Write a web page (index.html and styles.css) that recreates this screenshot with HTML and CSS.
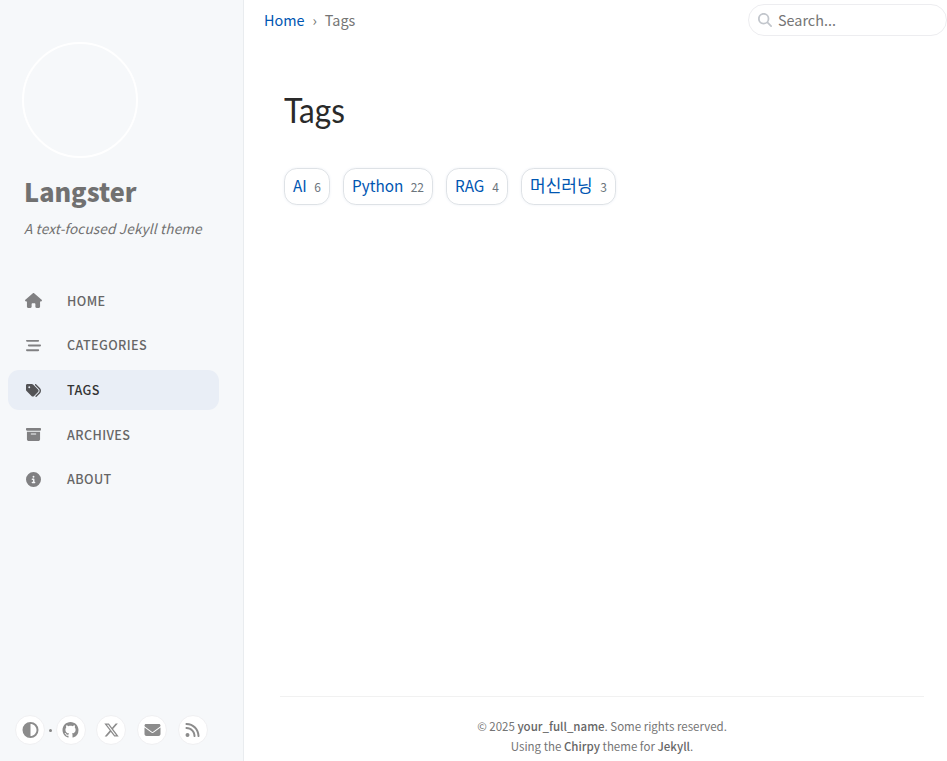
FILE: index.html
```html
<!DOCTYPE html>
<html lang="en">
<head>
<meta charset="utf-8">
<title>Tags | Langster</title>
<link rel="stylesheet" href="styles.css">
</head>
<body>
<aside class="sidebar">
  <header class="profile">
    <a class="avatar" href="#" aria-label="Avatar"></a>
    <a class="site-title" href="#"><span>Langster</span></a>
    <p class="site-subtitle"><span>A text-focused Jekyll theme</span></p>
  </header>
  <nav class="nav">
    <a class="nav-item" href="#"><svg viewBox="0 0 576 512"><path d="M575.800 255.500c0 18-15 32.100-32 32.100h-32l.7 160.200c0 2.700-.2 5.400-.5 8.100V472c0 22.100-17.900 40-40 40H392c-22.100 0-40-17.900-40-40v-88c0-17.700-14.300-32-32-32h-64c-17.700 0-32 14.300-32 32v88c0 22.100-17.900 40-40 40h-80c-22.100 0-40-17.900-40-40V287.600H32c-18 0-32-14-32-32.100 0-9 3-17 10-24L266.400 8c7-7 15-8 22-8s15 2 21 7l255.400 224.500c8 7 12 15 11 24z"/></svg><span>HOME</span></a>
    <a class="nav-item" href="#"><svg viewBox="0 0 512 512"><path d="M0 96c0-17.700 14.300-32 32-32h384c17.700 0 32 14.300 32 32s-14.300 32-32 32H32c-17.700 0-32-14.300-32-32zm64 160c0-17.700 14.300-32 32-32h384c17.700 0 32 14.300 32 32s-14.300 32-32 32H96c-17.700 0-32-14.300-32-32zm384 160c0 17.700-14.300 32-32 32H32c-17.700 0-32-14.300-32-32s14.300-32 32-32h384c17.700 0 32 14.300 32 32z"/></svg><span>CATEGORIES</span></a>
    <a class="nav-item active" href="#"><svg viewBox="0 0 512 512"><path d="M345 39.100L472.800 168.400c52.400 53 52.400 138.200 0 191.200L360.800 472.900c-9.300 9.400-24.500 9.500-33.900.2s-9.500-24.500-.2-33.900L438.600 325.900c33.900-34.300 33.900-89.400 0-123.700L310.900 72.900c-9.300-9.400-9.200-24.600.2-33.900s24.600-9.200 33.900.1zM0 229.500V80c0-26.500 21.500-48 48-48h149.500c17 0 33.300 6.700 45.300 18.700l168 168c25 25 25 65.500 0 90.500L277.300 442.700c-25 25-65.500 25-90.500 0l-168-168C6.700 262.700 0 246.500 0 229.500zM144 144a32 32 0 1 0-64 0 32 32 0 1 0 64 0z"/></svg><span>TAGS</span></a>
    <a class="nav-item" href="#"><svg viewBox="0 0 512 512"><path d="M32 32h448c17.700 0 32 14.300 32 32v32c0 17.700-14.300 32-32 32H32c-17.700 0-32-14.300-32-32V64c0-17.700 14.300-32 32-32zm0 128h448v256c0 35.300-28.700 64-64 64H96c-35.300 0-64-28.700-64-64V160zm128 80c0 8.800 7.200 16 16 16h160c8.800 0 16-7.200 16-16s-7.200-16-16-16H176c-8.800 0-16 7.200-16 16z"/></svg><span>ARCHIVES</span></a>
    <a class="nav-item" href="#"><svg viewBox="0 0 512 512"><path d="M256 512A256 256 0 1 0 256 0a256 256 0 1 0 0 512zM216 336h24v-64h-24c-13.300 0-24-10.700-24-24s10.700-24 24-24h48c13.300 0 24 10.700 24 24v88h8c13.300 0 24 10.700 24 24s-10.700 24-24 24h-80c-13.300 0-24-10.700-24-24s10.700-24 24-24zm40-208a32 32 0 1 1 0 64 32 32 0 1 1 0-64z"/></svg><span>ABOUT</span></a>
  </nav>
  <div class="contacts">
    <a class="round" href="#"><svg viewBox="0 0 512 512"><path d="M448 256c0-106-86-192-192-192v384c106 0 192-86 192-192zM0 256a256 256 0 1 1 512 0 256 256 0 1 1-512 0z"/></svg></a>
    <i class="dot"></i>
    <a class="round" href="#"><svg viewBox="0 0 16 16"><path d="M8 0C3.580 0 0 3.580 0 8c0 3.540 2.290 6.530 5.470 7.590.4.070.55-.17.55-.38 0-.19-.01-.82-.01-1.490-2.010.37-2.530-.49-2.690-.94-.09-.23-.48-.94-.82-1.130-.28-.15-.68-.52-.01-.53.63-.01 1.080.58 1.230.82.72 1.210 1.870.87 2.330.66.07-.52.28-.87.51-1.070-1.780-.2-3.640-.89-3.640-3.950 0-.87.31-1.590.82-2.150-.08-.2-.36-1.020.08-2.120 0 0 .67-.21 2.200.82.640-.18 1.320-.27 2-.27s1.360.09 2 .27c1.530-1.040 2.200-.82 2.200-.82.440 1.100.16 1.920.08 2.120.51.56.82 1.270.82 2.150 0 3.070-1.870 3.750-3.650 3.950.29.25.54.73.54 1.480 0 1.070-.01 1.930-.01 2.200 0 .21.15.46.55.38A8.010 8.010 0 0 0 16 8c0-4.420-3.580-8-8-8z"/></svg></a>
    <a class="round" href="#"><svg viewBox="0 0 512 512"><path d="M389.200 48h70.600L305.600 224.200 487 464H345L233.700 318.600 106.500 464H35.800l164.900-188.500L26.800 48h145.600l100.500 132.900zm-24.800 373.800h39.100L151.100 88h-42z"/></svg></a>
    <a class="round" href="#"><svg viewBox="0 0 512 512"><path d="M48 64C21.500 64 0 85.500 0 112c0 15.100 7.100 29.300 19.200 38.400l217.600 163.200c11.400 8.500 27 8.500 38.400 0l217.600-163.200c12.100-9.100 19.200-23.300 19.200-38.400 0-26.500-21.500-48-48-48H48zM0 176v208c0 35.300 28.700 64 64 64h384c35.300 0 64-28.700 64-64V176L294.400 339.200c-22.800 17.100-54 17.100-76.800 0L0 176z"/></svg></a>
    <a class="round" href="#"><svg viewBox="0 0 448 512"><path d="M0 64c0-17.700 14.300-32 32-32 229.800 0 416 186.200 416 416 0 17.700-14.300 32-32 32s-32-14.300-32-32C384 253.600 226.400 96 32 96 14.300 96 0 81.700 0 64zm0 352a64 64 0 1 1 128 0 64 64 0 1 1-128 0zm32-256c159.100 0 288 128.900 288 288 0 17.700-14.300 32-32 32s-32-14.300-32-32c0-123.700-100.300-224-224-224-17.700 0-32-14.300-32-32s14.300-32 32-32z"/></svg></a>
  </div>
</aside>
<div class="main">
  <div class="topbar">
    <nav class="crumbs"><a href="#">Home</a><span class="sep">›</span><span class="here">Tags</span></nav>
    <label class="search"><svg viewBox="0 0 512 512"><path d="M416 208c0 45.900-14.900 88.300-40 122.700l126.600 126.700c12.500 12.500 12.500 32.800 0 45.300s-32.800 12.500-45.300 0L330.700 376c-34.400 25.200-76.800 40-122.700 40C93.100 416 0 322.900 0 208S93.100 0 208 0s208 93.100 208 208zM208 352a144 144 0 1 0 0-288 144 144 0 1 0 0 288z"/></svg><span>Search...</span></label>
  </div>
  <main class="content">
    <h1>Tags</h1>
    <div class="tags">
      <a class="tag tag-ai" href="#"><b>AI</b><span>6</span></a>
      <a class="tag tag-python" href="#"><b>Python</b><span>22</span></a>
      <a class="tag tag-rag" href="#"><b>RAG</b><span>4</span></a>
      <a class="tag tag-ml" href="#"><b lang="ko">머신러닝</b><span>3</span></a>
    </div>
  </main>
  <footer class="footer">
    <p>© 2025 <strong>your_full_name</strong>. Some rights reserved.</p>
    <p>Using the <strong>Chirpy</strong> theme for <strong>Jekyll</strong>.</p>
  </footer>
</div>
</body>
</html>
```
FILE: styles.css
```css
* { box-sizing: border-box; }
body {
  margin: 0;
  height: 761px;
  display: flex;
  overflow: hidden;
  background: #fff;
  color: #34343c;
  font-family: "Noto Sans CJK KR", "Noto Sans", sans-serif;
  font-size: 14.4px;
}
a { text-decoration: none; color: #0056b2; }
p, h1 { margin: 0; }
svg { display: block; fill: currentColor; }

.sidebar {
  width: 244px;
  flex: none;
  display: flex;
  flex-direction: column;
  background: #f6f8fa;
  border-right: 1px solid #e9ecef;
}
.profile { padding: 42px 0 0 22px; }
.avatar {
  display: block;
  width: 116px;
  height: 116px;
  border: 2px solid #fff;
  border-radius: 50%;
}
.site-title {
  display: block;
  margin: 13px 0 0 2px;
  height: 40px;
  line-height: 40px;
  font-size: 25.300px;
  font-weight: 900;
  color: #717171;
}
.site-subtitle {
  margin: 5px 0 0 2px;
  height: 24px;
  line-height: 24px;
  font-size: 13.600px;
  letter-spacing: .15px;
  font-style: italic;
  white-space: nowrap;
  color: #717171;
}
.nav { padding: 40.300px 24px 0 8px; display: grid; row-gap: 4px; }
.nav-item {
  height: 40.700px;
  padding-left: 17px;
  display: flex;
  align-items: center;
  border-radius: 11px;
  font-size: 12.600px;
  font-weight: 500;
  line-height: 20px;
  letter-spacing: .4px;
  color: #666;
}
.nav-item svg { width: 17px; height: 15px; margin-right: 25px; color: #808082; }
.nav-item.active { background: #e9eef6; color: #333; }
.nav-item.active svg { color: #525255; }
.contacts {
  margin-top: auto;
  padding: 0 0 16px 15px;
  display: flex;
  align-items: center;
}
.round {
  width: 30px;
  height: 30px;
  margin-right: 10.700px;
  display: grid;
  place-items: center;
  border: 1px solid #f0f0f2;
  border-radius: 50%;
  background: #fff;
  color: #8c8c8c;
}
.round svg { width: 17px; height: 16px; }
.dot { width: 3px; height: 3px; margin: 0 4px 0 -7px; border-radius: 50%; background: #858585; }

.main { flex: 1; display: flex; flex-direction: column; min-width: 0; }
.topbar {
  height: 40px;
  padding-left: 20px;
  display: flex;
  align-items: center;
  justify-content: space-between;
}
.crumbs { display: flex; line-height: 24px; color: #757575; }
.sep { margin: 0 8px; }
.search {
  width: 199px;
  height: 32px;
  padding-left: 9px;
  display: flex;
  align-items: center;
  border: 1px solid #ededf0;
  border-radius: 16px;
  color: #757575;
  line-height: 24px;
}
.search svg { width: 14px; height: 14px; margin: -1px 6px 0 0; color: #c2c6cc; }

.content { padding: 48px 0 0 40px; }
h1 {
  height: 44px;
  line-height: 44px;
  font-family: Lato, sans-serif;
  font-size: 34px;
  transform: scaleX(.93);
  transform-origin: 0 0;
  font-weight: 400;
  color: #2a2a2a;
}
.tags { display: flex; gap: 13px; margin-top: 36px; }
.tag {
  height: 37px;
  padding: 0 8px;
  display: flex;
  align-items: center;
  justify-content: space-between;
  border: 1px solid #dee2e6;
  border-radius: 12.800px;
  box-shadow: 0 0 3px #eef1f7;
  line-height: 24px;
  white-space: nowrap;
}
.tag b { font-weight: 400; font-size: 15.300px; padding-bottom: 3px; }
.tag b:lang(ko) { font-size: 17px; padding-bottom: 4px; }
.tag span { font-size: 12px; color: #6c757d; padding-top: 0; }
.tag-ai { width: 46px; }
.tag-python { width: 90px; }
.tag-rag { width: 62px; }
.tag-ml { width: 95px; }
.footer {
  margin: auto 23px 0 36px;
  height: 65px;
  padding-top: 19px;
  border-top: 1px solid #f1f1f1;
  text-align: center;
  font-size: 11.500px;
  line-height: 20px;
  color: #757575;
}
.footer strong { font-weight: 500; color: #666; }
```
